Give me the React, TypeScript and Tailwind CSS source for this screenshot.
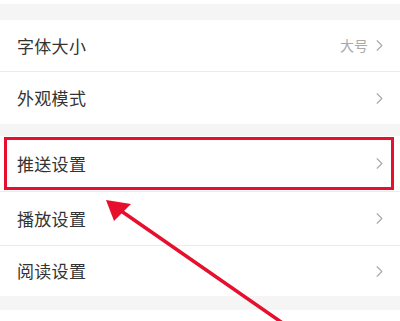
import { ChevronRight } from "lucide-react";

type Row = { label: string; value?: string; marked?: boolean; h: string };

const topRows: Row[] = [
	{ label: "字体大小", value: "大号", h: "h-[52px]" },
	{ label: "外观模式", h: "h-[52px]" },
];

const bottomRows: Row[] = [
	{ label: "推送设置", marked: true, h: "h-[56px]" },
	{ label: "播放设置", h: "h-[54px]" },
	{ label: "阅读设置", h: "h-[50px]" },
];

function SettingRow({ row, last }: { row: Row; last: boolean }) {
	return (
		<div className={`relative flex items-center justify-between bg-white pl-[17px] pr-[11px] ${row.h} ${last ? "" : "border-b border-[#ececec]"}`}>
			<span className="text-[17px] text-[#333] tracking-[0.3px]">{row.label}</span>
			<div className="flex items-center gap-[2px]">
				{row.value && <span className="text-[14px] text-[#aaa]">{row.value}</span>}
				<ChevronRight className="w-[19px] h-[19px] text-[#a8a8a8]" strokeWidth={1.4} />
			</div>
			{/* red highlight frame */}
			{row.marked && (
				<div className="absolute left-[4px] right-[6px] top-[1px] bottom-[1px] border-[3px] border-[#e60f2d] pointer-events-none"></div>
			)}
		</div>
	);
}

export default function App() {
	return (
		<div
			className="relative w-[400px] h-[321px] overflow-hidden bg-[#f5f5f5]"
			style={{ fontFamily: '"Noto Sans CJK SC", "Noto Sans", sans-serif' }}>
			<div className="h-[4px] bg-white"></div>
			<div className="h-[16px]"></div>

			<div className="flex flex-col">
				{topRows.map((r, i) => (
					<SettingRow key={r.label} row={r} last={i === topRows.length - 1} />
				))}
			</div>

			<div className="h-[12px]"></div>

			<div className="flex flex-col">
				{bottomRows.map((r, i) => (
					<SettingRow key={r.label} row={r} last={i === bottomRows.length - 1} />
				))}
			</div>

			<div className="h-[14px]"></div>
			<div className="h-[20px] bg-white"></div>

			{/* pointer arrow */}
			<svg className="absolute inset-0 pointer-events-none" width="400" height="321" viewBox="0 0 400 321">
				<line x1="284" y1="324" x2="114" y2="206" stroke="#e60f2d" strokeWidth="3.5" strokeLinecap="round" />
				<polygon points="106,200 131,204 114,221" fill="#e60f2d" />
			</svg>
		</div>
	);
}
